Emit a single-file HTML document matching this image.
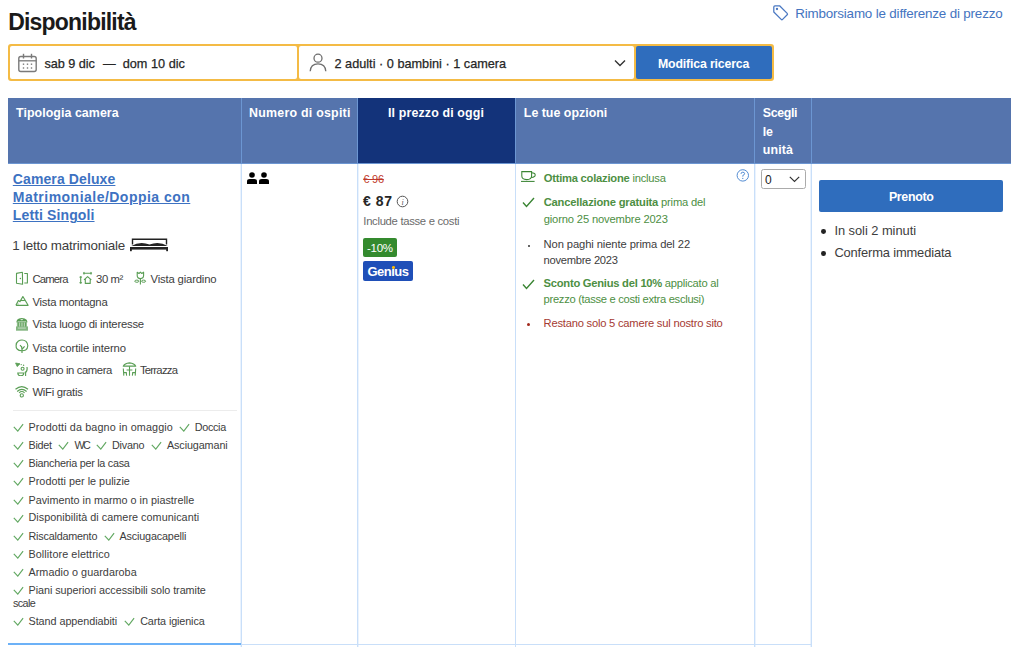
<!DOCTYPE html>
<html><head><meta charset="utf-8"><style>
html,body{margin:0;padding:0;background:#fff;width:1024px;height:647px;overflow:hidden;position:relative}
body{font-family:"Liberation Sans",sans-serif}
.t{position:absolute;white-space:nowrap}
.r{position:absolute;display:block}
u{text-decoration-thickness:1.3px;text-underline-offset:1.2px}
</style></head><body>
<div class="t" style="left:8.2px;top:7.20px;font-size:23px;line-height:30px;color:#1a1a1a;font-weight:bold;letter-spacing:-0.800px;">Disponibilità</div>
<svg class="r" style="left:772px;top:4px" width="17" height="17" viewBox="0 0 17 17"><path d="M1.8 3 Q1.8 1.8 3 1.8 L7.6 1.8 L15.2 9.4 Q15.9 10.1 15.2 10.8 L10.6 15.4 Q9.9 16.1 9.2 15.4 L1.8 8 Z" fill="none" stroke="#4a78c2" stroke-width="1.25" stroke-linejoin="round"/><circle cx="5" cy="5" r="1.15" fill="#4a78c2"/></svg>
<div class="t" style="left:795.2px;top:5.20px;font-size:13.4px;line-height:17px;color:#4474c0;letter-spacing:-0.174px;">Rimborsiamo le differenze di prezzo</div>
<div class="r" style="left:8px;top:44px;width:766px;height:37px;background:#f4bb45;border-radius:3px"></div>
<div class="r" style="left:10px;top:46px;width:287px;height:33px;background:#fff;border-radius:2px"></div>
<div class="r" style="left:299px;top:46px;width:335px;height:33px;background:#fff;border-radius:2px"></div>
<div class="r" style="left:636px;top:46px;width:136px;height:33px;background:#2f6dbd;border-radius:2px"></div>
<svg class="r" style="left:17px;top:53px" width="21" height="20" viewBox="0 0 21 20"><rect x="1.8" y="3.5" width="17.4" height="15" rx="2" fill="none" stroke="#7a7a7a" stroke-width="1.4"/><line x1="1.8" y1="7.8" x2="19.2" y2="7.8" stroke="#7a7a7a" stroke-width="1.3"/><line x1="6.5" y1="0.8" x2="6.5" y2="5.5" stroke="#7a7a7a" stroke-width="1.4"/><line x1="14.5" y1="0.8" x2="14.5" y2="5.5" stroke="#7a7a7a" stroke-width="1.4"/><rect x="5.8" y="10.5" width="1.4" height="1.4" fill="#7a7a7a"/><rect x="5.8" y="14.3" width="1.4" height="1.4" fill="#7a7a7a"/><rect x="9.8" y="10.5" width="1.4" height="1.4" fill="#7a7a7a"/><rect x="9.8" y="14.3" width="1.4" height="1.4" fill="#7a7a7a"/><rect x="13.8" y="10.5" width="1.4" height="1.4" fill="#7a7a7a"/><rect x="13.8" y="14.3" width="1.4" height="1.4" fill="#7a7a7a"/></svg>
<div class="t" style="left:44.5px;top:55.70px;font-size:12.7px;line-height:17px;color:#262626;letter-spacing:-0.041px;-webkit-text-stroke:0.25px #262626">sab 9 dic</div>
<div class="t" style="left:103px;top:55.70px;font-size:12.7px;line-height:17px;color:#262626;letter-spacing:-0.700px;-webkit-text-stroke:0.25px #262626">—</div>
<div class="t" style="left:122.7px;top:55.70px;font-size:12.7px;line-height:17px;color:#262626;letter-spacing:0.019px;-webkit-text-stroke:0.25px #262626">dom 10 dic</div>
<svg class="r" style="left:309px;top:53px" width="18" height="19" viewBox="0 0 18 19"><circle cx="9" cy="5.2" r="4" fill="none" stroke="#6e6e6e" stroke-width="1.3"/><path d="M1.2 18.2 Q1.6 10.8 9 10.8 Q16.4 10.8 16.8 18.2" fill="none" stroke="#6e6e6e" stroke-width="1.3"/></svg>
<div class="t" style="left:334.5px;top:55.70px;font-size:12.7px;line-height:17px;color:#262626;letter-spacing:0.009px;-webkit-text-stroke:0.25px #262626">2 adulti · 0 bambini · 1 camera</div>
<svg class="r" style="left:614px;top:59px" width="12" height="9" viewBox="0 0 12 9"><path d="M1 1.5 L6 6.5 L11 1.5" fill="none" stroke="#333" stroke-width="1.4"/></svg>
<div class="t" style="left:658px;top:56.20px;font-size:12.3px;line-height:16px;color:#ffffff;font-weight:bold;letter-spacing:-0.150px;">Modifica ricerca</div>
<div class="r" style="left:8px;top:98px;width:1003px;height:66px;background:#5574ad;"></div>
<div class="r" style="left:358px;top:98px;width:157px;height:66px;background:#13337a;"></div>
<div class="r" style="left:241px;top:98px;width:1px;height:66px;background:#6c96d2;"></div>
<div class="r" style="left:357px;top:98px;width:1px;height:66px;background:#6c96d2;"></div>
<div class="r" style="left:515px;top:98px;width:1px;height:66px;background:#6c96d2;"></div>
<div class="r" style="left:754px;top:98px;width:1px;height:66px;background:#6c96d2;"></div>
<div class="r" style="left:811px;top:98px;width:1px;height:66px;background:#6c96d2;"></div>
<div class="r" style="left:8px;top:163px;width:1003px;height:1px;background:#6c96d2;"></div>
<div class="t" style="left:16px;top:105.20px;font-size:12.4px;line-height:16px;color:#fff;font-weight:bold;letter-spacing:0.063px;">Tipologia camera</div>
<div class="t" style="left:249px;top:105.20px;font-size:12.4px;line-height:16px;color:#fff;font-weight:bold;letter-spacing:0.245px;">Numero di ospiti</div>
<div class="t" style="left:388px;top:105.20px;font-size:12.4px;line-height:16px;color:#fff;font-weight:bold;letter-spacing:0.145px;">Il prezzo di oggi</div>
<div class="t" style="left:523.8px;top:105.20px;font-size:12.4px;line-height:16px;color:#fff;font-weight:bold;letter-spacing:0.012px;">Le tue opzioni</div>
<div class="t" style="left:762.8px;top:105.20px;font-size:12.4px;line-height:16px;color:#fff;font-weight:bold;letter-spacing:-0.366px;">Scegli</div>
<div class="t" style="left:762.8px;top:124.20px;font-size:12.4px;line-height:16px;color:#fff;font-weight:bold;letter-spacing:-0.341px;">le</div>
<div class="t" style="left:762.8px;top:142.20px;font-size:12.4px;line-height:16px;color:#fff;font-weight:bold;letter-spacing:0.120px;">unità</div>
<div class="r" style="left:241px;top:164px;width:1px;height:483px;background:#c9dff9;"></div>
<div class="r" style="left:357px;top:164px;width:1px;height:483px;background:#c9dff9;"></div>
<div class="r" style="left:515px;top:164px;width:1px;height:483px;background:#c9dff9;"></div>
<div class="r" style="left:754px;top:164px;width:1px;height:483px;background:#c9dff9;"></div>
<div class="r" style="left:811px;top:164px;width:1px;height:483px;background:#c9dff9;"></div>
<div class="r" style="left:240px;top:164px;width:1px;height:483px;background:#eaf3fe;"></div>
<div class="r" style="left:358px;top:164px;width:1px;height:483px;background:#eaf3fe;"></div>
<div class="r" style="left:755px;top:164px;width:1px;height:483px;background:#eaf3fe;"></div>
<div class="r" style="left:810px;top:164px;width:1px;height:483px;background:#eaf3fe;"></div>
<div class="r" style="left:241px;top:644px;width:570px;height:1px;background:#c9dff9;"></div>
<div class="r" style="left:8px;top:643px;width:233px;height:2px;background:#6cb1f7;"></div>
<div class="t" style="left:12.8px;top:170.20px;font-size:14px;line-height:18px;color:#3d72c2;font-weight:bold;letter-spacing:0.111px;"><u>Camera Deluxe</u></div>
<div class="t" style="left:12.8px;top:188.20px;font-size:14px;line-height:18px;color:#3d72c2;font-weight:bold;letter-spacing:0.479px;"><u>Matrimoniale/Doppia con</u></div>
<div class="t" style="left:12.8px;top:206.20px;font-size:14px;line-height:18px;color:#3d72c2;font-weight:bold;letter-spacing:0.125px;"><u>Letti Singoli</u></div>
<div class="t" style="left:12.2px;top:237.20px;font-size:13.4px;line-height:17px;color:#3d3d3d;letter-spacing:-0.207px;">1 letto matrimoniale</div>
<svg class="r" style="left:129px;top:237px" width="40" height="15" viewBox="0 0 40 15"><path d="M3.5 7.5 L3.5 2.3 L37.5 2.3 L37.5 7.5" fill="none" stroke="#222" stroke-width="1.4"/><path d="M2.3 9.1 Q11 3.8 20.5 7.6 Q30 3.8 38.7 9.1 Z" fill="#222"/><rect x="1" y="10" width="38" height="2.6" fill="#222"/><rect x="1" y="12" width="1.8" height="2.2" fill="#222"/><rect x="37.2" y="12" width="1.8" height="2.2" fill="#222"/></svg>
<svg class="r" style="left:15px;top:271px" width="14" height="15" viewBox="0 0 14 15"><path d="M1.5 2.4 L7.4 1.3 L7.6 13.2 L1.5 12.2 Z" fill="none" stroke="#5a9e55" stroke-width="1.1" stroke-linejoin="round"/><path d="M9.3 2.5 L12.4 2.5 L12.4 12 L9.3 12" fill="none" stroke="#5a9e55" stroke-width="1.1" stroke-linejoin="round"/><circle cx="5.4" cy="7.4" r="0.75" fill="#5a9e55"/></svg>
<div class="t" style="left:32.5px;top:271.70px;font-size:11.3px;line-height:15px;color:#3d3d3d;letter-spacing:-0.838px;">Camera</div>
<svg class="r" style="left:78px;top:271px" width="15" height="15" viewBox="0 0 15 15"><path d="M5.2 2.3 L13.8 2.3 M5.2 2.3 L6.4 1.2 M5.2 2.3 L6.4 3.4 M13.8 2.3 L12.6 1.2 M13.8 2.3 L12.6 3.4 M2.7 5.3 L2.7 12.5 M2.7 5.3 L1.6 6.5 M2.7 5.3 L3.8 6.5 M2.7 12.5 L1.6 11.3 M2.7 12.5 L3.8 11.3" fill="none" stroke="#5a9e55" stroke-width="1.1"/><path d="M6 8.8 L9.6 5.6 L13.3 8.8 M7.3 7.8 L7.3 12.4 L12.2 12.4 L12.2 7.8" fill="none" stroke="#5a9e55" stroke-width="1.1" stroke-linejoin="round"/></svg>
<div class="t" style="left:96px;top:271.70px;font-size:11.3px;line-height:15px;color:#3d3d3d;letter-spacing:-0.396px;">30 m²</div>
<svg class="r" style="left:133px;top:271px" width="15" height="15" viewBox="0 0 15 15"><path d="M4.2 1.2 L6 2.5 L7.4 1.2 L8.8 2.5 L10.6 1.2 L10.6 4.6 Q10.6 7.6 7.4 7.6 Q4.2 7.6 4.2 4.6 Z" fill="none" stroke="#5a9e55" stroke-width="1.1" stroke-linejoin="round"/><path d="M7.4 7.6 L7.4 13.6" stroke="#5a9e55" stroke-width="1.1"/><ellipse cx="3.8" cy="10.2" rx="2" ry="1.1" fill="none" stroke="#5a9e55" stroke-width="1"/><ellipse cx="10.6" cy="10.2" rx="2" ry="1.1" fill="none" stroke="#5a9e55" stroke-width="1"/></svg>
<div class="t" style="left:150.6px;top:271.70px;font-size:11.3px;line-height:15px;color:#3d3d3d;letter-spacing:-0.174px;">Vista giardino</div>
<svg class="r" style="left:15px;top:295px" width="15" height="13" viewBox="0 0 15 13"><path d="M0.9 10.3 L13.1 10.3 L7.9 1.5 L5.1 6.4 M0.9 10.3 L3.4 5.6 L5.4 6.9" fill="none" stroke="#5a9e55" stroke-width="1.15" stroke-linejoin="round"/><path d="M5.8 5.5 L9.9 5.5" stroke="#5a9e55" stroke-width="1.1"/><path d="M3 7.8 L3 10.3" stroke="#5a9e55" stroke-width="0.8" opacity="0.6"/></svg>
<div class="t" style="left:32.5px;top:294.70px;font-size:11.3px;line-height:15px;color:#3d3d3d;letter-spacing:-0.240px;">Vista montagna</div>
<svg class="r" style="left:15px;top:317px" width="14" height="14" viewBox="0 0 14 14"><path d="M1.5 4.2 Q1.5 2.6 4 1.5 Q6.8 0.3 9.6 1.5 Q12.3 2.6 12.3 4.2 L12.3 5.4 L1.5 5.4 Z" fill="#5a9e55"/><ellipse cx="6.8" cy="2.6" rx="1.4" ry="0.55" fill="#fff" opacity="0.8"/><rect x="2.6" y="4.2" width="8.6" height="0.8" fill="#fff" opacity="0.55"/><rect x="1.8" y="5.4" width="10.2" height="4.2" fill="#5a9e55" opacity="0.45"/><rect x="2.6" y="5.4" width="1.2" height="4.2" fill="#5a9e55"/><rect x="5.1" y="5.4" width="1.2" height="4.2" fill="#5a9e55" opacity="0.8"/><rect x="7.6" y="5.4" width="1.2" height="4.2" fill="#5a9e55" opacity="0.8"/><rect x="10.1" y="5.4" width="1.2" height="4.2" fill="#5a9e55"/><rect x="1" y="9.4" width="12" height="4.3" fill="#5a9e55" opacity="0.75"/><rect x="2.8" y="10.6" width="8" height="0.9" fill="#fff" opacity="0.6"/></svg>
<div class="t" style="left:32.5px;top:316.70px;font-size:11.3px;line-height:15px;color:#3d3d3d;letter-spacing:-0.215px;">Vista luogo di interesse</div>
<svg class="r" style="left:15px;top:339px" width="14" height="15" viewBox="0 0 14 15"><path d="M7 11.7 Q3.6 11.7 2.1 10 Q0.9 8.5 1.1 6.5 Q1.2 3.6 3.4 2.1 Q5 1 7 1 Q9.4 1 11 2.4 Q12.9 4.4 12.8 6.8 Q12.7 9.8 10.6 11 Q9.2 11.7 7 11.7 Z" fill="none" stroke="#5a9e55" stroke-width="1.15"/><path d="M7 14 L7 11 L6.5 7 M6.6 7.8 L5 6.2 M7.2 10 L9.6 7.4" fill="none" stroke="#5a9e55" stroke-width="1.15"/></svg>
<div class="t" style="left:32.5px;top:340.70px;font-size:11.3px;line-height:15px;color:#3d3d3d;letter-spacing:-0.120px;">Vista cortile interno</div>
<svg class="r" style="left:15px;top:362px" width="14" height="14" viewBox="0 0 14 14"><path d="M0.6 1 L5 1.8 L2.2 4.6 Z" fill="#5a9e55" stroke="#5a9e55" stroke-width="0.8" stroke-linejoin="round"/><circle cx="6.2" cy="2.6" r="0.7" fill="#5a9e55"/><circle cx="8.6" cy="3.3" r="0.7" fill="#5a9e55"/><circle cx="7.6" cy="6.8" r="1.5" fill="none" stroke="#5a9e55" stroke-width="1.1"/><path d="M12 5 Q12.8 9.5 9.8 10.6" fill="none" stroke="#5a9e55" stroke-width="1.2"/><path d="M2.8 11 Q2.8 13.8 5.8 13.8 Q8.8 13.8 8.8 11 Z" fill="none" stroke="#5a9e55" stroke-width="1.2"/><path d="M10.6 10.4 L10.6 14" stroke="#5a9e55" stroke-width="1.1"/></svg>
<div class="t" style="left:32.5px;top:362.70px;font-size:11.3px;line-height:15px;color:#3d3d3d;letter-spacing:-0.395px;">Bagno in camera</div>
<svg class="r" style="left:122px;top:362px" width="15" height="15" viewBox="0 0 15 15"><path d="M1.3 4.2 Q2.6 1.4 7.5 0.9 Q12.4 1.4 13.7 4.2 Z" fill="none" stroke="#5a9e55" stroke-width="1.2" stroke-linejoin="round"/><path d="M7.5 4.3 L7.5 13.8 M4.6 8 L10.4 8 M1.3 6.5 L1.8 13.6 M1.7 10.6 L4.3 10.6 L4.6 13.6 M13.7 6.5 L13.2 13.6 M13.3 10.6 L10.7 10.6 L10.4 13.6" fill="none" stroke="#5a9e55" stroke-width="1.1"/></svg>
<div class="t" style="left:139.9px;top:362.70px;font-size:11.3px;line-height:15px;color:#3d3d3d;letter-spacing:-0.747px;">Terrazza</div>
<svg class="r" style="left:14px;top:385px" width="16" height="14" viewBox="0 0 16 14"><path d="M1.5 4.3 Q7.8 -1.1 14 4.3" fill="none" stroke="#5a9e55" stroke-width="1.15"/><path d="M3.2 6.5 Q7.8 2.3 12.6 6.5" fill="none" stroke="#5a9e55" stroke-width="1.15"/><path d="M5.1 7.8 Q7.8 5.2 10.6 7.8" fill="none" stroke="#5a9e55" stroke-width="1.1"/><circle cx="7.8" cy="10.4" r="1.6" fill="none" stroke="#5a9e55" stroke-width="1.1"/></svg>
<div class="t" style="left:32.5px;top:384.70px;font-size:11.3px;line-height:15px;color:#3d3d3d;letter-spacing:-0.306px;">WiFi gratis</div>
<div class="r" style="left:13px;top:410px;width:224px;height:1px;background:#ececec;"></div>
<svg class="r" style="left:12.5px;top:422.9px" width="11" height="9" viewBox="0 0 11 9"><path d="M0.8 3.9 L4.8 8.1 L10.1 1.2" fill="none" stroke="#62a862" stroke-width="1.15"/></svg>
<div class="t" style="left:28.5px;top:420.20px;font-size:10.8px;line-height:14px;color:#3d3d3d;letter-spacing:0.122px;">Prodotti da bagno in omaggio</div>
<svg class="r" style="left:178.8px;top:422.9px" width="11" height="9" viewBox="0 0 11 9"><path d="M0.8 3.9 L4.8 8.1 L10.1 1.2" fill="none" stroke="#62a862" stroke-width="1.15"/></svg>
<div class="t" style="left:194.8px;top:420.20px;font-size:10.8px;line-height:14px;color:#3d3d3d;letter-spacing:-0.323px;">Doccia</div>
<svg class="r" style="left:12.5px;top:441.4px" width="11" height="9" viewBox="0 0 11 9"><path d="M0.8 3.9 L4.8 8.1 L10.1 1.2" fill="none" stroke="#62a862" stroke-width="1.15"/></svg>
<div class="t" style="left:28.5px;top:438.20px;font-size:10.8px;line-height:14px;color:#3d3d3d;letter-spacing:-0.254px;">Bidet</div>
<svg class="r" style="left:58.4px;top:441.4px" width="11" height="9" viewBox="0 0 11 9"><path d="M0.8 3.9 L4.8 8.1 L10.1 1.2" fill="none" stroke="#62a862" stroke-width="1.15"/></svg>
<div class="t" style="left:74.4px;top:438.20px;font-size:10.8px;line-height:14px;color:#3d3d3d;letter-spacing:-1.593px;">WC</div>
<svg class="r" style="left:96px;top:441.4px" width="11" height="9" viewBox="0 0 11 9"><path d="M0.8 3.9 L4.8 8.1 L10.1 1.2" fill="none" stroke="#62a862" stroke-width="1.15"/></svg>
<div class="t" style="left:112px;top:438.20px;font-size:10.8px;line-height:14px;color:#3d3d3d;letter-spacing:-0.204px;">Divano</div>
<svg class="r" style="left:151px;top:441.4px" width="11" height="9" viewBox="0 0 11 9"><path d="M0.8 3.9 L4.8 8.1 L10.1 1.2" fill="none" stroke="#62a862" stroke-width="1.15"/></svg>
<div class="t" style="left:167px;top:438.20px;font-size:10.8px;line-height:14px;color:#3d3d3d;letter-spacing:-0.113px;">Asciugamani</div>
<svg class="r" style="left:12.5px;top:459.2px" width="11" height="9" viewBox="0 0 11 9"><path d="M0.8 3.9 L4.8 8.1 L10.1 1.2" fill="none" stroke="#62a862" stroke-width="1.15"/></svg>
<div class="t" style="left:28.5px;top:456.20px;font-size:10.8px;line-height:14px;color:#3d3d3d;letter-spacing:-0.260px;">Biancheria per la casa</div>
<svg class="r" style="left:12.5px;top:477.2px" width="11" height="9" viewBox="0 0 11 9"><path d="M0.8 3.9 L4.8 8.1 L10.1 1.2" fill="none" stroke="#62a862" stroke-width="1.15"/></svg>
<div class="t" style="left:28.5px;top:474.20px;font-size:10.8px;line-height:14px;color:#3d3d3d;letter-spacing:0.025px;">Prodotti per le pulizie</div>
<svg class="r" style="left:12.5px;top:495.7px" width="11" height="9" viewBox="0 0 11 9"><path d="M0.8 3.9 L4.8 8.1 L10.1 1.2" fill="none" stroke="#62a862" stroke-width="1.15"/></svg>
<div class="t" style="left:28.5px;top:493.20px;font-size:10.8px;line-height:14px;color:#3d3d3d;letter-spacing:0.004px;">Pavimento in marmo o in piastrelle</div>
<svg class="r" style="left:12.5px;top:513.6px" width="11" height="9" viewBox="0 0 11 9"><path d="M0.8 3.9 L4.8 8.1 L10.1 1.2" fill="none" stroke="#62a862" stroke-width="1.15"/></svg>
<div class="t" style="left:28.5px;top:510.20px;font-size:10.8px;line-height:14px;color:#3d3d3d;letter-spacing:0.042px;">Disponibilità di camere comunicanti</div>
<svg class="r" style="left:12.5px;top:532.1px" width="11" height="9" viewBox="0 0 11 9"><path d="M0.8 3.9 L4.8 8.1 L10.1 1.2" fill="none" stroke="#62a862" stroke-width="1.15"/></svg>
<div class="t" style="left:28.5px;top:529.20px;font-size:10.8px;line-height:14px;color:#3d3d3d;letter-spacing:-0.211px;">Riscaldamento</div>
<svg class="r" style="left:103.5px;top:532.1px" width="11" height="9" viewBox="0 0 11 9"><path d="M0.8 3.9 L4.8 8.1 L10.1 1.2" fill="none" stroke="#62a862" stroke-width="1.15"/></svg>
<div class="t" style="left:119.5px;top:529.20px;font-size:10.8px;line-height:14px;color:#3d3d3d;letter-spacing:-0.165px;">Asciugacapelli</div>
<svg class="r" style="left:12.5px;top:550.0px" width="11" height="9" viewBox="0 0 11 9"><path d="M0.8 3.9 L4.8 8.1 L10.1 1.2" fill="none" stroke="#62a862" stroke-width="1.15"/></svg>
<div class="t" style="left:28.5px;top:547.20px;font-size:10.8px;line-height:14px;color:#3d3d3d;letter-spacing:0.081px;">Bollitore elettrico</div>
<svg class="r" style="left:12.5px;top:568.4000000000001px" width="11" height="9" viewBox="0 0 11 9"><path d="M0.8 3.9 L4.8 8.1 L10.1 1.2" fill="none" stroke="#62a862" stroke-width="1.15"/></svg>
<div class="t" style="left:28.5px;top:565.20px;font-size:10.8px;line-height:14px;color:#3d3d3d;letter-spacing:0.038px;">Armadio o guardaroba</div>
<svg class="r" style="left:12.5px;top:585.9000000000001px" width="11" height="9" viewBox="0 0 11 9"><path d="M0.8 3.9 L4.8 8.1 L10.1 1.2" fill="none" stroke="#62a862" stroke-width="1.15"/></svg>
<div class="t" style="left:28.5px;top:583.20px;font-size:10.8px;line-height:14px;color:#3d3d3d;letter-spacing:-0.053px;">Piani superiori accessibili solo tramite</div>
<svg class="r" style="left:12.5px;top:616.9000000000001px" width="11" height="9" viewBox="0 0 11 9"><path d="M0.8 3.9 L4.8 8.1 L10.1 1.2" fill="none" stroke="#62a862" stroke-width="1.15"/></svg>
<div class="t" style="left:28.5px;top:614.20px;font-size:10.8px;line-height:14px;color:#3d3d3d;letter-spacing:-0.046px;">Stand appendiabiti</div>
<svg class="r" style="left:124.2px;top:616.9000000000001px" width="11" height="9" viewBox="0 0 11 9"><path d="M0.8 3.9 L4.8 8.1 L10.1 1.2" fill="none" stroke="#62a862" stroke-width="1.15"/></svg>
<div class="t" style="left:140.2px;top:614.20px;font-size:10.8px;line-height:14px;color:#3d3d3d;letter-spacing:-0.118px;">Carta igienica</div>
<div class="t" style="left:12.9px;top:596.20px;font-size:10.8px;line-height:14px;color:#3d3d3d;letter-spacing:-0.578px;">scale</div>
<svg class="r" style="left:246px;top:172px" width="25" height="13" viewBox="0 0 25 13"><circle cx="6" cy="3" r="2.8" fill="#000"/><path d="M1 12 L1 9.3 Q1 6.9 3.8 6.9 L8.2 6.9 Q11 6.9 11 9.3 L11 12 Z" fill="#000"/><circle cx="18" cy="3" r="2.8" fill="#000"/><path d="M13 12 L13 9.3 Q13 6.9 15.8 6.9 L20.2 6.9 Q23 6.9 23 9.3 L23 12 Z" fill="#000"/></svg>
<div class="t" style="left:363.3px;top:172.20px;font-size:11px;line-height:14px;color:#c0392b;letter-spacing:-0.237px;"><s>€ 96</s></div>
<div class="t" style="left:363px;top:192.20px;font-size:14px;line-height:18px;color:#262626;font-weight:bold;letter-spacing:0.584px;">€ 87</div>
<svg class="r" style="left:396px;top:195px" width="13" height="13" viewBox="0 0 13 13"><circle cx="6.5" cy="6.5" r="5.3" fill="none" stroke="#555" stroke-width="1"/><text x="6.5" y="10" font-size="8" font-style="italic" text-anchor="middle" fill="#555" font-family="Liberation Serif">i</text></svg>
<div class="t" style="left:363.3px;top:213.70px;font-size:11.3px;line-height:15px;color:#6b6b6b;letter-spacing:-0.309px;">Include tasse e costi</div>
<div class="r" style="left:363px;top:238px;width:34px;height:19px;background:#348a2e;border-radius:2px"></div>
<div class="t" style="left:367px;top:240.70px;font-size:11.5px;line-height:15px;color:#fff;letter-spacing:-0.282px;">-10%</div>
<div class="r" style="left:363px;top:261px;width:50px;height:20px;background:#1f4fb8;border-radius:2px"></div>
<div class="t" style="left:367.5px;top:263.20px;font-size:13px;line-height:17px;color:#fff;font-weight:bold;letter-spacing:-0.513px;">Genius</div>
<div class="r" style="left:392.1px;top:266.1px;width:2.8px;height:2.8px;background:#febb02;border-radius:50%"></div>
<svg class="r" style="left:520px;top:170px" width="17" height="13" viewBox="0 0 17 13"><path d="M1.8 1.6 L11.6 1.6 L11.6 6 Q11.6 9.6 6.7 9.6 Q1.8 9.6 1.8 6 Z" fill="none" stroke="#3a8533" stroke-width="1.05"/><path d="M11.6 2.8 Q15.2 2.8 15.2 4.9 Q15.2 7 11.3 7.4" fill="none" stroke="#3a8533" stroke-width="1.05"/><path d="M1 11.4 L14.6 11.4" stroke="#3a8533" stroke-width="1.05"/></svg>
<div class="t" style="left:543.7px;top:170.70px;font-size:11.2px;line-height:15px;color:#4d8f43;letter-spacing:-0.230px;"><b>Ottima colazione</b> inclusa</div>
<svg class="r" style="left:522px;top:197px" width="13" height="11" viewBox="0 0 13 11"><path d="M1 5.5 L4.5 9.5 L12 1" fill="none" stroke="#3a8533" stroke-width="1.4"/></svg>
<div class="t" style="left:543.7px;top:194.70px;font-size:11.2px;line-height:15px;color:#4d8f43;letter-spacing:-0.195px;"><b>Cancellazione gratuita</b> prima del</div>
<div class="t" style="left:543.7px;top:211.70px;font-size:11.2px;line-height:15px;color:#4d8f43;letter-spacing:-0.152px;">giorno 25 novembre 2023</div>
<div class="r" style="left:527.8px;top:244.8px;width:2.6px;height:2.6px;background:#333;border-radius:50%"></div>
<div class="t" style="left:543.6px;top:236.70px;font-size:11.2px;line-height:15px;color:#3d3d3d;letter-spacing:-0.098px;">Non paghi niente prima del 22</div>
<div class="t" style="left:543.6px;top:252.70px;font-size:11.2px;line-height:15px;color:#3d3d3d;letter-spacing:-0.286px;">novembre 2023</div>
<svg class="r" style="left:522px;top:279px" width="13" height="11" viewBox="0 0 13 11"><path d="M1 5.5 L4.5 9.5 L12 1" fill="none" stroke="#3a8533" stroke-width="1.4"/></svg>
<div class="t" style="left:543.6px;top:275.70px;font-size:11.2px;line-height:15px;color:#4d8f43;letter-spacing:-0.252px;"><b>Sconto Genius del 10%</b> applicato al</div>
<div class="t" style="left:543.6px;top:291.70px;font-size:11.2px;line-height:15px;color:#4d8f43;letter-spacing:-0.306px;">prezzo (tasse e costi extra esclusi)</div>
<div class="r" style="left:527px;top:322.5px;width:3.2px;height:3.2px;background:#a2291c;border-radius:50%"></div>
<div class="t" style="left:543.6px;top:315.70px;font-size:11.2px;line-height:15px;color:#a53a32;letter-spacing:-0.222px;">Restano solo 5 camere sul nostro sito</div>
<svg class="r" style="left:736px;top:169px" width="14" height="14" viewBox="0 0 14 14"><circle cx="6.8" cy="6.4" r="5.7" fill="none" stroke="#4a86d0" stroke-width="0.95"/><path d="M5 4.9 Q5 3.2 6.8 3.2 Q8.6 3.2 8.6 4.7 Q8.6 5.8 6.8 6.5 L6.8 7.6" fill="none" stroke="#4a86d0" stroke-width="0.95"/><circle cx="6.8" cy="9.4" r="0.6" fill="#4a86d0"/></svg>
<div class="r" style="left:761px;top:169px;width:43px;height:18px;background:#fff;border:1px solid #ababab;border-radius:2.5px"></div>
<div class="t" style="left:765px;top:172.20px;font-size:12px;line-height:16px;color:#222;">0</div>
<svg class="r" style="left:789px;top:176px" width="11" height="7" viewBox="0 0 11 7"><path d="M0.8 0.8 L5.5 5.5 L10.2 0.8" fill="none" stroke="#333" stroke-width="1.2"/></svg>
<div class="r" style="left:819px;top:180px;width:184px;height:32px;background:#2f6dbd;border-radius:2px"></div>
<div class="t" style="left:888.9px;top:189.20px;font-size:12.4px;line-height:16px;color:#fff;font-weight:bold;letter-spacing:-0.324px;">Prenoto</div>
<div class="r" style="left:821.2px;top:229.4px;width:4.8px;height:4.8px;background:#222;border-radius:50%"></div>
<div class="t" style="left:834.4px;top:222.20px;font-size:12.9px;line-height:17px;color:#3d3d3d;letter-spacing:-0.050px;">In soli 2 minuti</div>
<div class="r" style="left:821.2px;top:251px;width:4.8px;height:4.8px;background:#222;border-radius:50%"></div>
<div class="t" style="left:834.4px;top:244.20px;font-size:12.9px;line-height:17px;color:#3d3d3d;letter-spacing:-0.149px;">Conferma immediata</div>
</body></html>
